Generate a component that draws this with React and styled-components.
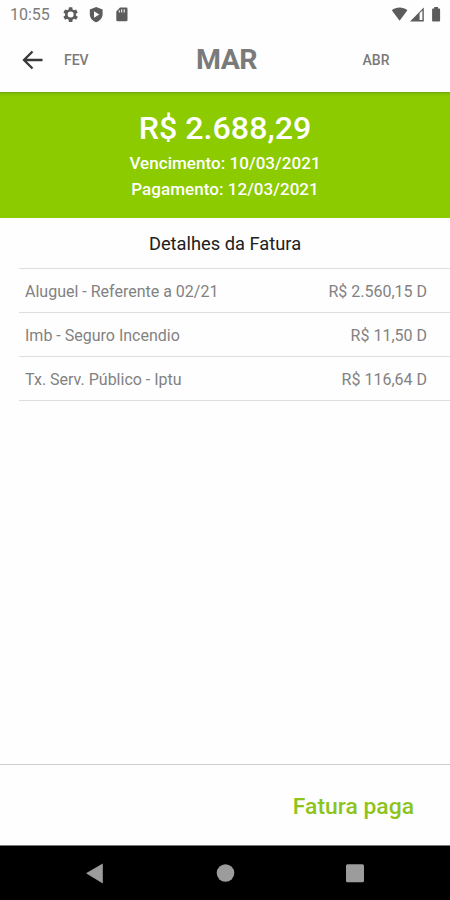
import React from 'react';
import styled, { createGlobalStyle } from 'styled-components';

const GlobalStyle = createGlobalStyle`
    * {
        box-sizing: border-box;
    }

    body {
        margin: 0;
        background: #fefefe;
        font-family: Roboto, 'Liberation Sans', sans-serif;
    }
`;

const Screen = styled.div`
    display: flex;
    flex-direction: column;
    width: 450px;
    height: 900px;
    overflow: hidden;
    background: #fefefe;
`;

const StatusBar = styled.div`
    display: flex;
    justify-content: space-between;
    height: 30px;
    padding: 0 7px 0 10px;
    color: #5c5c5c;
`;

const StatusGroup = styled.div`
    display: flex;
    align-items: center;

    svg {
        display: block;
        fill: currentColor;
    }
`;

const Clock = styled.span`
    width: 51px;
    font-size: 16px;
    line-height: 30px;
    color: #7c7c7c;
`;

const Header = styled.header`
    display: grid;
    grid-template-columns: 64px 89px 147px 152px;
    align-items: center;
    height: 62px;
    padding-bottom: 2px;
    color: #7a7a7a;
`;

const BackButton = styled.button`
    display: flex;
    padding: 0 0 0 21px;
    border: 0;
    background: none;
`;

const Month = styled.span`
    font-size: ${(props) => (props.$current ? '28.5px' : '14px')};
    font-weight: ${(props) => (props.$current ? 700 : 500)};
    letter-spacing: ${(props) => (props.$current ? '-0.5px' : '0')};
    text-align: ${(props) => props.$align || 'left'};
    line-height: 34px;
`;

const Summary = styled.section`
    height: 126px;
    padding-top: 16px;
    background: linear-gradient(#6fa60d, #83c203 2px, #8bcb00 5px);
    color: #fff;
    text-align: center;
`;

const Total = styled.div`
    margin-bottom: 2px;
    font-size: 32.2px;
    font-weight: 500;
    line-height: 40px;
`;

const SummaryLine = styled.div`
    font-size: 17px;
    font-weight: 500;
    line-height: 26px;
    letter-spacing: 0.05px;
`;

const Details = styled.main`
    flex: 1;
`;

const DetailsTitle = styled.h2`
    height: 50px;
    margin: 0;
    color: #202020;
    font-size: 18.3px;
    font-weight: 400;
    line-height: 51px;
    text-align: center;
`;

const List = styled.div`
    margin-left: 19px;
    border-top: 1px solid #dedede;
`;

const Row = styled.div`
    display: flex;
    justify-content: space-between;
    height: 44px;
    padding: 0 23px 0 6px;
    border-bottom: 1px solid #dedede;
    color: #828282;
    font-size: 16px;
    line-height: 46px;
`;

const Footer = styled.footer`
    height: 81px;
    padding-right: 36px;
    border-top: 1px solid #cfcfcf;
    color: #8cc41c;
    font-size: 22.9px;
    font-weight: 500;
    line-height: 83px;
    text-align: right;
`;

const NavBar = styled.nav`
    display: flex;
    height: 55px;
    border-top: 1px solid #777;
    background: #000;

    svg {
        display: block;
        fill: #9c9c9c;
    }
`;

const items = [
    { label: 'Aluguel - Referente a 02/21', value: 'R$ 2.560,15 D' },
    { label: 'Imb - Seguro Incendio', value: 'R$ 11,50 D' },
    { label: 'Tx. Serv. Público - Iptu', value: 'R$ 116,64 D' },
];

function NotificationIcons() {
    return (
        <svg width="76" height="30" viewBox="0 0 76 30">
            <path
                transform="translate(-1.3 4.5) scale(0.84)"
                fillRule="evenodd"
                d="M19.4 13a7.5 7.5 0 0 0 0-2l2.1-1.6-2-3.5-2.5 1a7.3 7.3 0 0 0-1.7-1L15 3.3h-4l-.4 2.6a7.3 7.3 0 0 0-1.7 1l-2.5-1-2 3.5L6.5 11a7.5 7.5 0 0 0 0 2l-2.1 1.6 2 3.5 2.5-1a7.3 7.3 0 0 0 1.7 1l.4 2.6h4l.4-2.6a7.3 7.3 0 0 0 1.7-1l2.5 1 2-3.5zM13 8.4a3.6 3.6 0 1 1 0 7.2 3.6 3.6 0 0 1 0-7.2z"
            />
            <path
                fillRule="evenodd"
                d="M35.2 6.9L41.6 9.5V14c0 4-2.6 6.9-6.4 8.3-3.8-1.4-6.4-4.3-6.4-8.3V9.5zM33 11.2v6.6l5.3-3.3z"
            />
            <path
                fillRule="evenodd"
                d="M59 7.6h6.2q1.3 0 1.3 1.3v11q0 1.3-1.3 1.3h-8.6q-1.3 0-1.3-1.3v-8.5zM57.8 10.2v2.4h1v-2.4zm2.4-1v3.4h1V9.2zm2.5 0v3.4h1V9.2z"
            />
        </svg>
    );
}

function SystemIcons() {
    return (
        <svg width="52" height="30" viewBox="0 0 52 30">
            <path d="M0.8 10.2C5 6.6 12.2 6.6 16.4 10.2L8.6 20.7z" />
            <path
                fillRule="evenodd"
                d="M19 21.4L32.8 7.4v14zM28.6 13.2v6.9h2.8v-9.6z"
            />
            <path d="M43.2 7h3.8v1.4h1.2q.9 0 .9.900v11.2q0 .9-.9.900H42q-.9 0-.9-.9V9.3q0-.9.900-.9h1.2z" />
        </svg>
    );
}

export default function App() {
    return (
        <Screen>
            <GlobalStyle />
            <StatusBar>
                <StatusGroup>
                    <Clock>10:55</Clock>
                    <NotificationIcons />
                </StatusGroup>
                <StatusGroup>
                    <SystemIcons />
                </StatusGroup>
            </StatusBar>
            <Header>
                <BackButton aria-label="Voltar">
                    <svg width="22" height="20" viewBox="0 0 22 20">
                        <path
                            d="M21.5 10H3M11.5 1.5L3 10l8.5 8.5"
                            fill="none"
                            stroke="#383838"
                            strokeWidth="2.3"
                        />
                    </svg>
                </BackButton>
                <Month>FEV</Month>
                <Month $current $align="center">
                    MAR
                </Month>
                <Month $align="center">ABR</Month>
            </Header>
            <Summary>
                <Total>R$ 2.688,29</Total>
                <SummaryLine>Vencimento: 10/03/2021</SummaryLine>
                <SummaryLine>Pagamento: 12/03/2021</SummaryLine>
            </Summary>
            <Details>
                <DetailsTitle>Detalhes da Fatura</DetailsTitle>
                <List>
                    {items.map((item) => (
                        <Row key={item.label}>
                            <span>{item.label}</span>
                            <span>{item.value}</span>
                        </Row>
                    ))}
                </List>
            </Details>
            <Footer>Fatura paga</Footer>
            <NavBar>
                <svg width="450" height="54" viewBox="0 0 450 54">
                    <path d="M86 27.2L102.8 17.4v20z" />
                    <circle cx="225.5" cy="27" r="8.8" />
                    <rect x="346" y="18.2" width="18" height="18" rx="1.5" />
                </svg>
            </NavBar>
        </Screen>
    );
}
